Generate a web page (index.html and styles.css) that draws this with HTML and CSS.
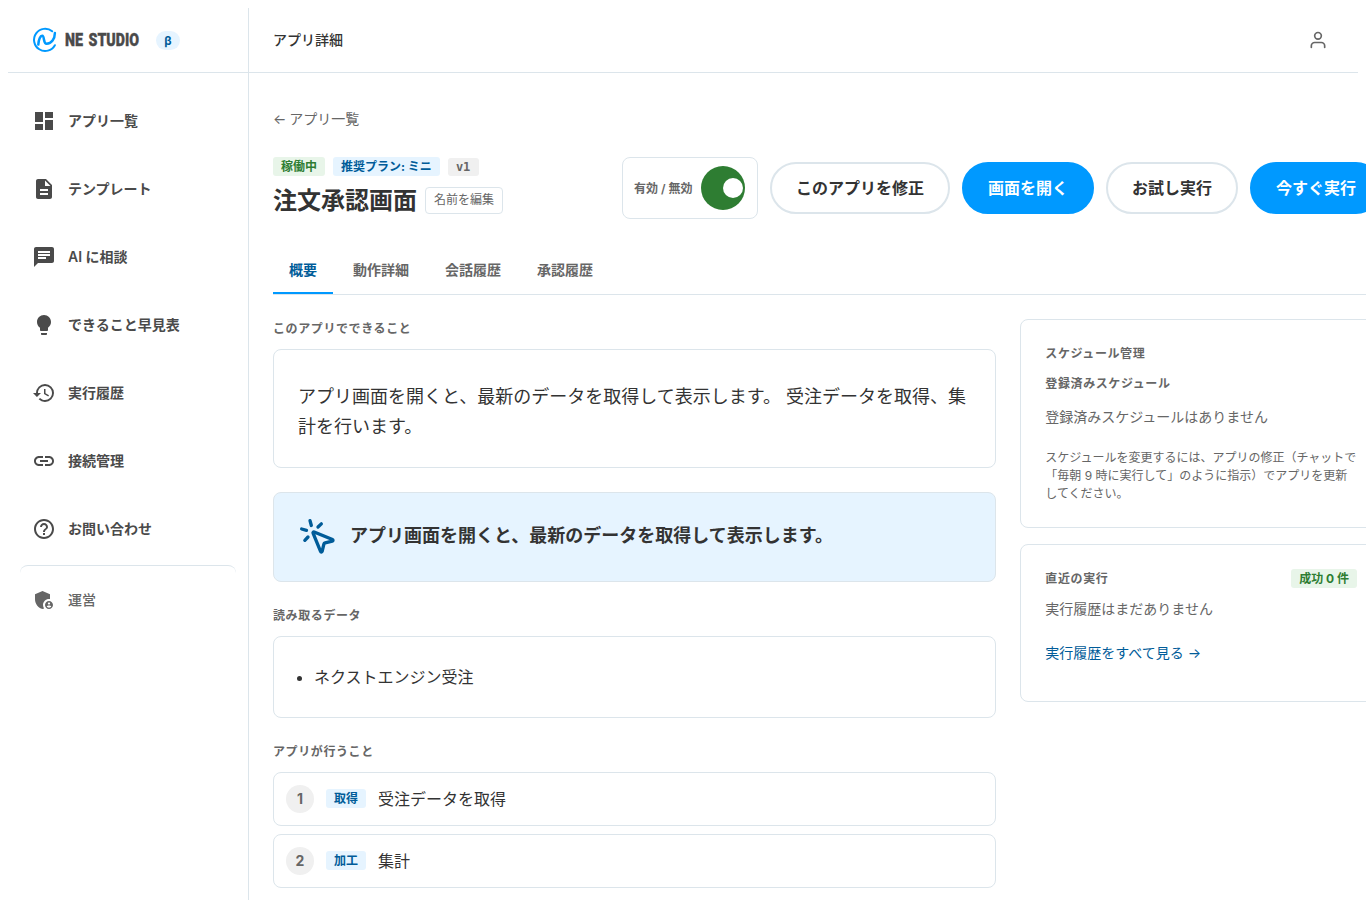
FILE: index.html
```
<!DOCTYPE html>
<html lang="ja">
<head>
    <meta charset="UTF-8">
    <meta name="viewport" content="width=device-width, initial-scale=1.0">
    <title>アプリ詳細 | NE STUDIO</title>
    <link rel="stylesheet" href="styles.css">
</head>
<body>
    <!-- Header -->
    <header class="header">
        <div class="brand">
            <svg class="logo" width="112" height="26" viewBox="0 0 112 26">
                <g fill="none" stroke="#0099ff" stroke-linecap="round">
                    <path stroke-width="2" d="M20.2 4.3A11.1 11.1 0 1 0 22.9 18.2"/>
                    <path stroke-width="2.5" d="M6.3 17.6C6.6 12.8 8.3 8.6 10.3 8.8C12.6 9 11.1 16.7 14.6 16.7C19.6 16.7 22.8 12 22.9 6"/>
                </g>
                <text class="logo-text" x="33" y="19.4" textLength="18" lengthAdjust="spacingAndGlyphs">NE</text>
                <text class="logo-text" x="56.5" y="19.4" textLength="50.5" lengthAdjust="spacingAndGlyphs">STUDIO</text>
            </svg>
            <span class="beta">β</span>
        </div>
        <div class="topbar">
            <span class="page-name">アプリ詳細</span>
            <svg class="user-icon" width="20" height="20" viewBox="0 0 24 24"><path d="M20 21v-2a4 4 0 0 0-4-4H8a4 4 0 0 0-4 4v2"/><circle cx="12" cy="7" r="4"/></svg>
        </div>
    </header>

    <div class="layout">
        <!-- Side navigation -->
        <nav class="sidebar">
            <a class="nav-item" href="#">
                <svg viewBox="0 0 24 24"><path d="M3 13h8V3H3v10zm0 8h8v-6H3v6zm10 0h8V11h-8v10zm0-18v6h8V3h-8z"/></svg>
                <span>アプリ一覧</span>
            </a>
            <a class="nav-item" href="#">
                <svg viewBox="0 0 24 24"><path d="M14 2H6c-1.1 0-1.99.9-1.99 2L4 20c0 1.1.89 2 1.99 2H18c1.1 0 2-.9 2-2V8l-6-6zm2 16H8v-2h8v2zm0-4H8v-2h8v2zm-3-5V3.5L18.5 9H13z"/></svg>
                <span>テンプレート</span>
            </a>
            <a class="nav-item" href="#">
                <svg viewBox="0 0 24 24"><path d="M20 2H4c-1.1 0-1.99.9-1.99 2L2 22l4-4h14c1.1 0 2-.9 2-2V4c0-1.1-.9-2-2-2zM6 9h12v2H6V9zm8 5H6v-2h8v2zm4-6H6V6h12v2z"/></svg>
                <span>AI に相談</span>
            </a>
            <a class="nav-item" href="#">
                <svg viewBox="0 0 24 24"><path d="M9 21c0 .5.4 1 1 1h4c.6 0 1-.5 1-1v-1H9v1zm3-19C8.1 2 5 5.1 5 9c0 2.4 1.2 4.5 3 5.7V17c0 .5.4 1 1 1h6c.6 0 1-.5 1-1v-2.3c1.8-1.3 3-3.4 3-5.7 0-3.9-3.1-7-7-7z"/></svg>
                <span>できること早見表</span>
            </a>
            <a class="nav-item" href="#">
                <svg viewBox="0 0 24 24"><path d="M13 3a9 9 0 0 0-9 9H1l3.89 3.89.07.14L9 12H6c0-3.87 3.13-7 7-7s7 3.13 7 7-3.13 7-7 7c-1.93 0-3.68-.79-4.94-2.06l-1.42 1.42A8.954 8.954 0 0 0 13 21a9 9 0 0 0 0-18zm-1 5v5l4.28 2.54.72-1.21-3.5-2.08V8H12z"/></svg>
                <span>実行履歴</span>
            </a>
            <a class="nav-item" href="#">
                <svg viewBox="0 0 24 24"><path d="M3.9 12c0-1.71 1.39-3.1 3.1-3.1h4V7H7c-2.76 0-5 2.24-5 5s2.24 5 5 5h4v-1.9H7c-1.71 0-3.1-1.39-3.1-3.1zM8 13h8v-2H8v2zm9-6h-4v1.9h4c1.71 0 3.1 1.39 3.1 3.1s-1.39 3.1-3.1 3.1h-4V17h4c2.76 0 5-2.24 5-5s-2.24-5-5-5z"/></svg>
                <span>接続管理</span>
            </a>
            <a class="nav-item" href="#">
                <svg viewBox="0 0 24 24"><path d="M11 18h2v-2h-2v2zm1-16C6.48 2 2 6.48 2 12s4.48 10 10 10 10-4.48 10-10S17.52 2 12 2zm0 18c-4.41 0-8-3.59-8-8s3.59-8 8-8 8 3.59 8 8-3.59 8-8 8zm0-14c-2.21 0-4 1.79-4 4h2c0-1.1.9-2 2-2s2 .9 2 2c0 2-3 1.75-3 5h2c0-2.25 3-2.5 3-5 0-2.21-1.79-4-4-4z"/></svg>
                <span>お問い合わせ</span>
            </a>
            <a class="nav-item nav-admin" href="#">
                <svg viewBox="0 0 24 24"><path d="M17 11c.34 0 .67.04 1 .09V6.27L10.5 3 3 6.27v4.91c0 4.54 3.2 8.79 7.5 9.82.55-.13 1.08-.32 1.6-.55-.69-.98-1.1-2.17-1.1-3.45 0-3.31 2.69-6 6-6z"/><path d="M17 13c-2.21 0-4 1.79-4 4s1.79 4 4 4 4-1.79 4-4-1.79-4-4-4zm0 1.38c.62 0 1.12.51 1.12 1.12s-.51 1.12-1.12 1.12-1.12-.51-1.12-1.12.5-1.12 1.12-1.12zm0 5.37c-.93 0-1.74-.46-2.24-1.17.05-.72 1.51-1.08 2.24-1.08s2.19.36 2.24 1.08c-.5.71-1.31 1.17-2.24 1.17z"/></svg>
                <span>運営</span>
            </a>
        </nav>

        <!-- Main Content -->
        <main class="main">
            <a class="back-link" href="#">← アプリ一覧</a>

            <div class="app-header">
                <div class="app-title">
                    <div class="badges">
                        <span class="badge green">稼働中</span>
                        <span class="badge blue">推奨プラン: ミニ</span>
                        <span class="badge version">v1</span>
                    </div>
                    <div class="title-row">
                        <h1>注文承認画面</h1>
                        <button class="rename">名前を編集</button>
                    </div>
                </div>
                <div class="actions">
                    <div class="toggle-box">
                        <span>有効 / 無効</span>
                        <button class="toggle" aria-label="有効"></button>
                    </div>
                    <button class="btn">このアプリを修正</button>
                    <button class="btn primary">画面を開く</button>
                    <button class="btn">お試し実行</button>
                    <button class="btn primary">今すぐ実行</button>
                </div>
            </div>

            <div class="tabs">
                <a class="tab active" href="#">概要</a>
                <a class="tab" href="#">動作詳細</a>
                <a class="tab" href="#">会話履歴</a>
                <a class="tab" href="#">承認履歴</a>
            </div>

            <div class="columns">
                <div class="overview">
                    <section>
                        <h2>このアプリでできること</h2>
                        <div class="card summary">アプリ画面を開くと、最新のデータを取得して表示します。 受注データを取得、集計を行います。</div>
                    </section>

                    <div class="card callout">
                        <svg width="40" height="40" viewBox="0 0 24 24"><path d="M14 4.1 12 6"/><path d="m5.1 8-2.9-.8"/><path d="m6 12-1.9 2"/><path d="M7.2 2.2 8 5.1"/><path d="M9.037 9.69a.498.498 0 0 1 .653-.653l11 4.5a.5.5 0 0 1-.074.949l-4.349 1.041a1 1 0 0 0-.74.739l-1.04 4.35a.5.5 0 0 1-.95.074z"/></svg>
                        <strong>アプリ画面を開くと、最新のデータを取得して表示します。</strong>
                    </div>

                    <section>
                        <h2>読み取るデータ</h2>
                        <div class="card sources">
                            <ul>
                                <li>ネクストエンジン受注</li>
                            </ul>
                        </div>
                    </section>

                    <section>
                        <h2>アプリが行うこと</h2>
                        <div class="steps">
                            <div class="card step">
                                <span class="num">1</span>
                                <span class="badge blue">取得</span>
                                <span class="step-name">受注データを取得</span>
                            </div>
                            <div class="card step">
                                <span class="num">2</span>
                                <span class="badge blue">加工</span>
                                <span class="step-name">集計</span>
                            </div>
                        </div>
                    </section>
                </div>

                <aside class="side">
                    <div class="card schedule">
                        <h2>スケジュール管理</h2>
                        <h3>登録済みスケジュール</h3>
                        <p class="empty">登録済みスケジュールはありません</p>
                        <p class="note">スケジュールを変更するには、アプリの修正（チャットで「毎朝 9 時に実行して」のように指示）でアプリを更新してください。</p>
                    </div>
                    <div class="card recent">
                        <div class="recent-head">
                            <h2>直近の実行</h2>
                            <span class="badge green">成功 0 件</span>
                        </div>
                        <p class="empty">実行履歴はまだありません</p>
                        <a class="all-link" href="#">実行履歴をすべて見る →</a>
                    </div>
                </aside>
            </div>
        </main>
    </div>
</body>
</html>
```
FILE: styles.css
```
/* General Styles */
* {
    box-sizing: border-box;
}

body {
    font-family: Inter, "Noto Sans CJK JP", sans-serif;
    font-size: 16px;
    line-height: 1.5;
    color: #333;
    background-color: #fff;
    margin: 0;
    padding: 8px 8px 0;
}

h1, h2, h3, p, ul {
    margin: 0;
}

a {
    text-decoration: none;
}

button {
    font-family: inherit;
    cursor: pointer;
}

/* Header */
.header {
    display: flex;
    height: 65px;
    border-bottom: 1px solid #dce5eb;
}

.brand {
    width: 240px;
    padding-left: 24px;
    display: flex;
    align-items: center;
    gap: 12px;
}

.logo {
    overflow: visible;
}

.logo-text {
    font-family: "Roboto", sans-serif;
    font-weight: 900;
    font-size: 19px;
    fill: #4a4a4a;
    stroke: #4a4a4a;
    stroke-width: 0.4;
}

.beta {
    width: 24px;
    height: 19px;
    line-height: 19px;
    border-radius: 10px;
    background-color: #e6f4ff;
    color: #005c99;
    font-size: 12px;
    font-weight: 700;
    text-align: center;
}

.topbar {
    flex: 1;
    display: flex;
    align-items: center;
    justify-content: space-between;
    padding: 0 30px 0 24px;
    border-left: 1px solid #dce5eb;
}

.page-name {
    padding-bottom: 2px;
    font-size: 14px;
    font-weight: 500;
}

.user-icon {
    fill: none;
    stroke: #666;
    stroke-width: 2;
    stroke-linecap: round;
    stroke-linejoin: round;
}

/* Sidebar */
.layout {
    display: flex;
    height: 827px;
}

.sidebar {
    width: 240px;
    flex-shrink: 0;
    padding: 18px 12px 0;
}

.nav-item {
    display: flex;
    align-items: center;
    gap: 12px;
    height: 60px;
    margin-bottom: 8px;
    padding: 0 12px;
    border-radius: 8px;
    color: #4a4a4a;
    font-size: 14px;
    font-weight: 600;
}

.nav-item svg {
    width: 24px;
    height: 24px;
    fill: currentColor;
}

.nav-item span {
    padding-bottom: 2px;
}

.nav-admin {
    height: 69px;
    margin-top: -2px;
    border-top: 1px solid #dce5eb;
    color: #666;
    font-weight: 500;
}

/* Main Content */
.main {
    flex-shrink: 0;
    padding: 24px 0 0 24px;
    border-left: 1px solid #dce5eb;
}

.back-link {
    display: flex;
    align-items: center;
    height: 42px;
    margin-bottom: 18px;
    color: #666;
    font-size: 14px;
    word-spacing: -1px;
}

.app-header {
    display: flex;
    justify-content: space-between;
    width: 1109px;
    height: 62px;
}

.badges {
    display: flex;
    align-items: flex-end;
    gap: 8px;
    height: 19px;
}

.badge {
    height: 19px;
    line-height: 19px;
    padding: 0 8px;
    border-radius: 3px;
    font-size: 12px;
    font-weight: 700;
    white-space: nowrap;
}

.green {
    background-color: #e8f5e9;
    color: #2e7d32;
}

.blue {
    background-color: #e6f4ff;
    color: #005c99;
}

.version {
    width: 31px;
    height: 18px;
    line-height: 18px;
    background-color: #f0f0f0;
    color: #666;
    font-family: "DejaVu Sans Mono", monospace;
}

.title-row {
    display: flex;
    align-items: center;
    gap: 8px;
    margin-top: 6px;
}

h1 {
    padding-top: 2px;
    font-size: 24px;
    font-weight: 700;
    line-height: 34px;
}

.rename {
    height: 27px;
    padding: 0 8px 3px;
    border: 1px solid #dce5eb;
    border-radius: 4px;
    background-color: #fff;
    color: #666;
    font-size: 12px;
}

.actions {
    display: flex;
    align-items: center;
    gap: 12px;
}

.toggle-box {
    display: flex;
    align-items: center;
    justify-content: space-between;
    width: 136px;
    height: 62px;
    padding: 0 12px 0 11px;
    border: 1px solid #dce5eb;
    border-radius: 8px;
    color: #666;
    font-size: 12px;
    font-weight: 600;
    white-space: nowrap;
}

.toggle-box span {
    padding-top: 2px;
}

.toggle {
    display: flex;
    align-items: center;
    justify-content: flex-end;
    width: 44px;
    height: 44px;
    padding: 0 2px;
    border: none;
    border-radius: 50%;
    background-color: #2e7d32;
}

.toggle::after {
    content: "";
    width: 20px;
    height: 20px;
    border-radius: 50%;
    background-color: #fff;
}

.btn {
    height: 52px;
    padding: 0 24px 2px;
    border: 2px solid #dce5eb;
    border-radius: 26px;
    background-color: #fff;
    color: #333;
    font-size: 16px;
    font-weight: 700;
    white-space: nowrap;
}

.primary {
    background-color: #0099ff;
    border-color: #0099ff;
    color: #fff;
}

/* Tabs */
.tabs {
    display: flex;
    gap: 4px;
    margin-top: 27px;
    border-bottom: 1px solid #dce5eb;
}

.tab {
    display: flex;
    align-items: center;
    height: 48px;
    padding: 0 16px;
    border-bottom: 2px solid transparent;
    color: #666;
    font-size: 14px;
    font-weight: 700;
}

.active {
    color: #005c99;
    border-color: #0099ff;
}

/* Overview */
.columns {
    display: grid;
    grid-template-columns: 2fr 1fr;
    align-items: start;
    gap: 24px;
    width: 1109px;
    margin-top: 24px;
}

.overview {
    display: flex;
    flex-direction: column;
    gap: 24px;
}

h2, h3 {
    color: #666;
    font-size: 12px;
    font-weight: 700;
    line-height: 18px;
    letter-spacing: 0.6px;
}

.overview h2 {
    padding-top: 1px;
    margin-bottom: 11px;
}

.card {
    padding: 24px;
    border: 1px solid #dce5eb;
    border-radius: 8px;
}

.summary {
    height: 119px;
    padding-top: 32px;
    font-size: 18px;
    line-height: 30px;
}

.callout {
    display: flex;
    align-items: center;
    gap: 12px;
    background-color: #e6f4ff;
    font-size: 18px;
}

.callout strong {
    padding-bottom: 4px;
}

.callout svg {
    fill: none;
    stroke: #005c99;
    stroke-width: 2;
    stroke-linecap: round;
    stroke-linejoin: round;
}

.sources {
    height: 82px;
    padding: 28px 24px;
}

.sources ul {
    padding-left: 16px;
}

.steps {
    display: flex;
    flex-direction: column;
    gap: 8px;
}

.step {
    display: flex;
    align-items: center;
    gap: 12px;
    padding: 12px;
}

.step .badge {
    margin-bottom: 2px;
}

.num {
    width: 28px;
    height: 28px;
    line-height: 28px;
    border-radius: 50%;
    background-color: #f0f0f0;
    color: #666;
    font-size: 14px;
    font-weight: 700;
    text-align: center;
}

/* Right column */
.side {
    display: flex;
    flex-direction: column;
    gap: 16px;
}

.schedule {
    height: 209px;
    padding-top: 25px;
}

.schedule h3 {
    margin-top: 12px;
}

.empty {
    color: #666;
    font-size: 14px;
    line-height: 21px;
}

.schedule .empty {
    margin: 13px 0 22px;
}

.note {
    color: #666;
    font-size: 12px;
    line-height: 18px;
}

.recent {
    height: 158px;
}

.recent-head {
    display: flex;
    justify-content: space-between;
    align-items: center;
    margin-bottom: 10px;
}

.all-link {
    display: flex;
    align-items: center;
    height: 44px;
    margin-top: 11px;
    color: #005c99;
    font-size: 14px;
}
```
